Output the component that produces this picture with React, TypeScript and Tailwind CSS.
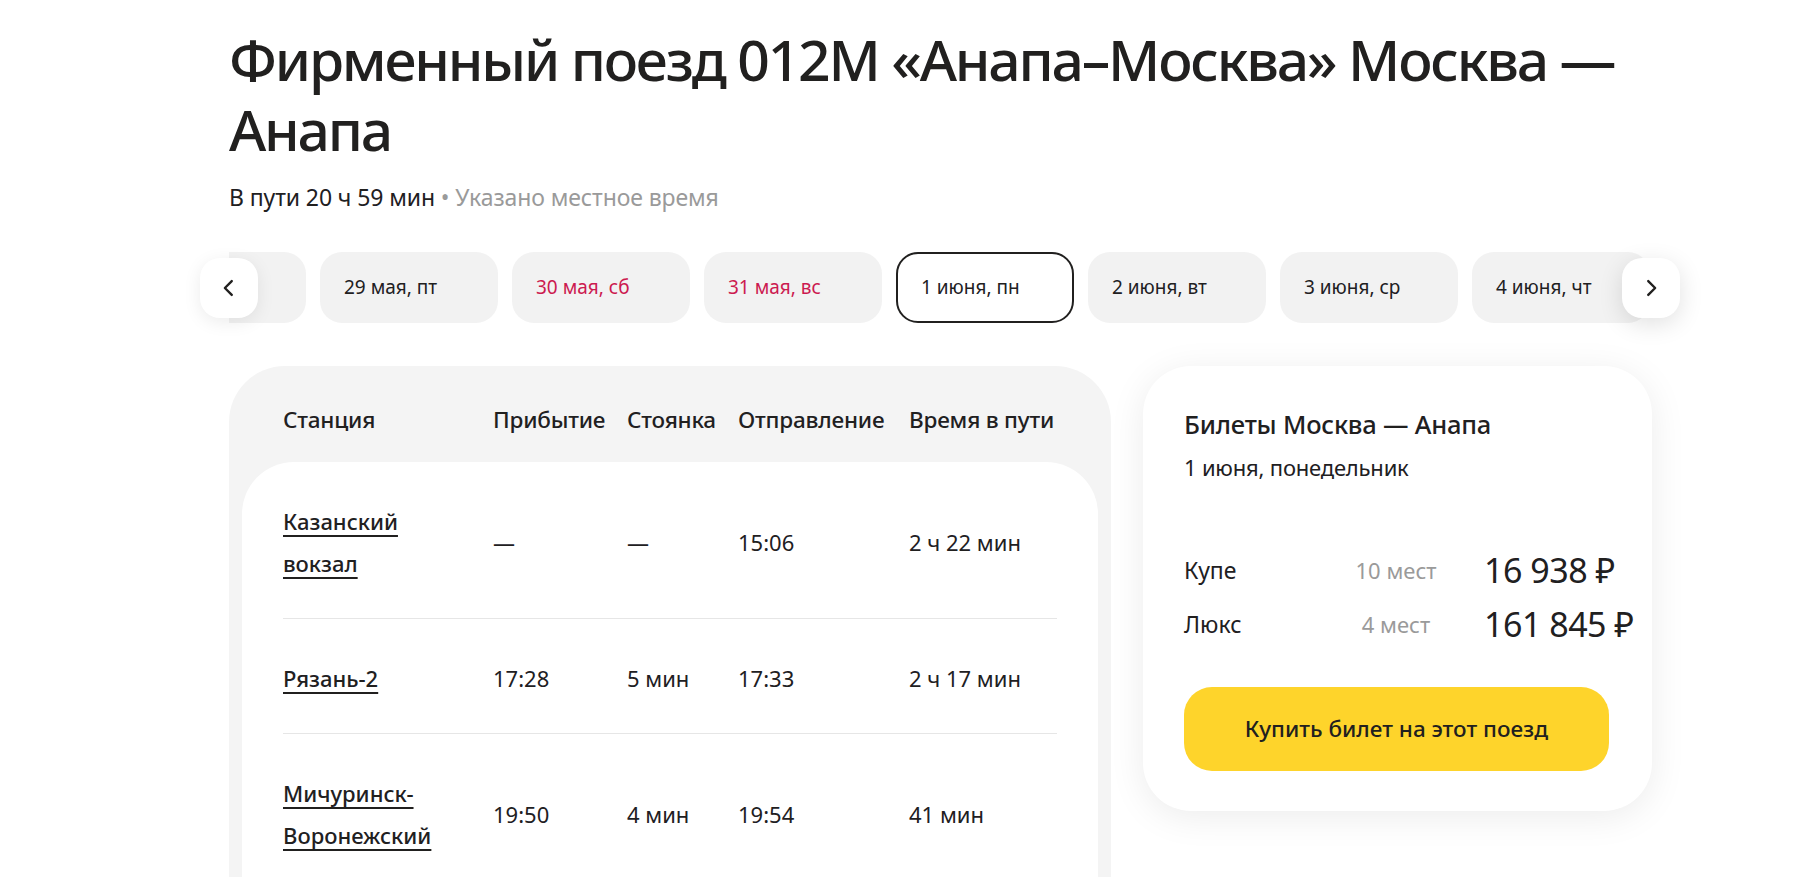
import React from "react";

type Stop = {
  station: string[];
  arrival: string;
  stay: string;
  departure: string;
  travel: string;
};

const stops: Stop[] = [
  { station: ["Казанский", "вокзал"], arrival: "—", stay: "—", departure: "15:06", travel: "2 ч 22 мин" },
  { station: ["Рязань-2"], arrival: "17:28", stay: "5 мин", departure: "17:33", travel: "2 ч 17 мин" },
  { station: ["Мичуринск-", "Воронежский"], arrival: "19:50", stay: "4 мин", departure: "19:54", travel: "41 мин" },
];

const dates: { label: string; holiday?: boolean; active?: boolean }[] = [
  { label: "28 мая, чт" },
  { label: "29 мая, пт" },
  { label: "30 мая, сб", holiday: true },
  { label: "31 мая, вс", holiday: true },
  { label: "1 июня, пн", active: true },
  { label: "2 июня, вт" },
  { label: "3 июня, ср" },
  { label: "4 июня, чт" },
  { label: "5 июня, пт" },
];

function Chevron({ dir }: { dir: "left" | "right" }) {
  return (
    <svg width="22" height="22" viewBox="0 0 24 24" fill="none">
      <path
        d={dir === "left" ? "M15 4.5 7.5 12 15 19.5" : "M9 4.5 16.5 12 9 19.5"}
        stroke="#21201f"
        strokeWidth="2.6"
        strokeLinecap="round"
        strokeLinejoin="round"
      />
    </svg>
  );
}

const cols = "grid grid-cols-[210px_134px_111px_171px_1fr]";

export default function App() {
  return (
    <div className="min-h-screen overflow-hidden bg-white font-['Noto_Sans',sans-serif] text-[#21201f]">
      <div className="ml-[229px] w-[1423px] pt-[24px]">
        <h1 className="whitespace-nowrap text-[57px] font-medium leading-[70px] tracking-[-2.2px]">
          Фирменный поезд 012M «Анапа–Москва» Москва —<br />
          Анапа
        </h1>
        <p className="mt-[18px] text-[23px] leading-[30px] tracking-[-0.1px]">
          В пути 20 ч 59 мин <span className="text-[#9a9a9a]">• Указано местное время</span>
        </p>

        {/* date picker */}
        <div className="relative mt-[40px] h-[71px]">
          <div className="h-full overflow-hidden">
            <div className="ml-[-101px] flex gap-[14px]">
              {dates.map((d) => (
                <div
                  key={d.label}
                  className={
                    d.active
                      ? "flex h-[71px] w-[178px] shrink-0 items-center rounded-[22px] border-[2.5px] border-[#21201f] bg-white pl-[23px] text-[19px]"
                      : d.holiday
                      ? "flex h-[71px] w-[178px] shrink-0 items-center rounded-[22px] bg-[#f2f2f2] pl-[24px] text-[19px] text-[#cc1a50]"
                      : "flex h-[71px] w-[178px] shrink-0 items-center rounded-[22px] bg-[#f2f2f2] pl-[24px] text-[19px]"
                  }
                >
                  {d.label}
                </div>
              ))}
            </div>
          </div>
          <button className="absolute left-[-29px] top-[6px] flex h-[60px] w-[58px] items-center justify-center rounded-[20px] bg-white shadow-[0_4px_18px_rgba(0,0,0,0.08)]">
            <Chevron dir="left" />
          </button>
          <button className="absolute right-[-28px] top-[6px] flex h-[60px] w-[58px] items-center justify-center rounded-[20px] bg-white shadow-[0_6px_24px_rgba(0,0,0,0.12)]">
            <Chevron dir="right" />
          </button>
        </div>

        <div className="mt-[43px] flex items-start gap-[32px]">
          {/* timetable */}
          <div className="w-[882px] rounded-t-[56px] bg-[#f4f4f4] px-[13px]">
            <div className={`${cols} px-[41px] pb-[28px] pt-[40px] text-[22.5px] font-medium leading-[28px] tracking-[-0.2px]`}>
              <div>Станция</div>
              <div>Прибытие</div>
              <div>Стоянка</div>
              <div>Отправление</div>
              <div className="whitespace-nowrap">Время в пути</div>
            </div>
            <div className="rounded-t-[52px] bg-white px-[41px] pb-[40px]">
              {stops.map((s, i) => (
                <div
                  key={s.departure}
                  className={`${cols} items-center pb-[34px] pt-[38px] text-[22px] leading-[42px] ${
                    i < stops.length - 1 ? "border-b border-[#e6e6e6]" : ""
                  }`}
                >
                  <div className="font-medium">
                    {s.station.map((line) => (
                      <div key={line}>
                        <a href="#" className="underline decoration-[1.5px] underline-offset-[5px]">
                          {line}
                        </a>
                      </div>
                    ))}
                  </div>
                  <div>{s.arrival}</div>
                  <div>{s.stay}</div>
                  <div>{s.departure}</div>
                  <div className="whitespace-nowrap">{s.travel}</div>
                </div>
              ))}
            </div>
          </div>

          {/* ticket card */}
          <div className="w-[509px] rounded-[48px] bg-white pb-[40px] pl-[41px] pr-[43px] pt-[42px] shadow-[0_6px_36px_rgba(0,0,0,0.08)]">
            <div className="text-[25.5px] font-medium leading-[32px] tracking-[-0.2px]">Билеты Москва — Анапа</div>
            <div className="mt-[13px] text-[22px] leading-[28px] tracking-[-0.2px]">1 июня, понедельник</div>
            <div className="mt-[62px]">
              <div className="grid h-[54px] grid-cols-[150px_124px_1fr] items-center">
                <div className="text-[23px]">Купе</div>
                <div className="text-center text-[22px] text-[#9a9a9a]">10 мест</div>
                <div className="ml-[26px] whitespace-nowrap text-[34px] tracking-[-0.5px]">16 938 ₽</div>
              </div>
              <div className="grid h-[54px] grid-cols-[150px_124px_1fr] items-center">
                <div className="text-[23px]">Люкс</div>
                <div className="text-center text-[22px] text-[#9a9a9a]">4 мест</div>
                <div className="ml-[26px] whitespace-nowrap text-[34px] tracking-[-0.5px]">161 845 ₽</div>
              </div>
            </div>
            <button className="mt-[36px] flex h-[84px] w-full items-center justify-center rounded-[28px] bg-[#fed42b] text-[22.5px] font-medium">
              Купить билет на этот поезд
            </button>
          </div>
        </div>
      </div>
    </div>
  );
}
